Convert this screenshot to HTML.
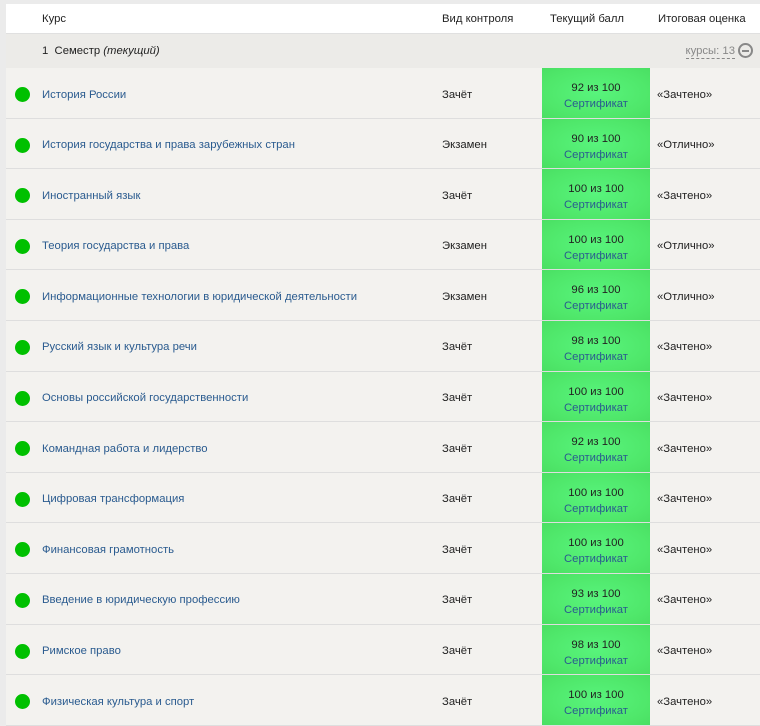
<!DOCTYPE html>
<html><head><meta charset="utf-8"><style>
*{margin:0;padding:0;box-sizing:border-box}
body{width:760px;height:721px;overflow:hidden;background:#ebebeb;font-family:"Liberation Sans",sans-serif;font-size:11.3px;color:#222}
.wrap{position:absolute;left:6px;top:4px;width:754px;background:#f3f2ef}
.hdr{height:30px;background:#fff;border-bottom:1px solid #e0e0e0;position:relative}
.hdr span{position:absolute;top:9px}
.sem{height:34px;background:#ecebe8;position:relative}
.row{height:50.6px;border-bottom:1px solid #dedede;position:relative}
.dot{position:absolute;left:9px;top:19px;width:15px;height:15px;border-radius:50%;background:#00c000}
.name{position:absolute;left:36px;top:20.5px;color:#2a5b8f}
.type{position:absolute;left:436px;top:20.5px}
.score{position:absolute;left:536px;top:0;width:108px;height:100%;background:radial-gradient(ellipse at center,#58f47c 0%,#4fe76a 70%,#4adf63 100%);text-align:center;padding-top:12px;line-height:16px}
.score a{color:#2a5b8f;display:block}
.mark{position:absolute;left:651px;top:20.5px}
</style></head><body>
<div class="wrap">
<div class="hdr"><span style="left:36px">Курс</span><span style="left:436px">Вид контроля</span><span style="left:544px">Текущий балл</span><span style="left:652px">Итоговая оценка</span></div>
<div class="sem"><span style="position:absolute;left:36px;top:11px">1 &nbsp;Семестр <i>(текущий)</i></span><span style="position:absolute;right:25px;top:11px;color:#888;border-bottom:1px dashed #888;line-height:13px">курсы: 13</span><span style="position:absolute;left:732px;top:9px;width:15px;height:15px;border:2px solid #888;border-radius:50%"><span style="position:absolute;left:2px;top:4.5px;width:7px;height:2px;background:#888"></span></span></div>
<div class="row"><div class="dot"></div><span class="name">История России</span><span class="type">Зачёт</span><div class="score">92 из 100<a>Сертификат</a></div><span class="mark">«Зачтено»</span></div>
<div class="row"><div class="dot"></div><span class="name">История государства и права зарубежных стран</span><span class="type">Экзамен</span><div class="score">90 из 100<a>Сертификат</a></div><span class="mark">«Отлично»</span></div>
<div class="row"><div class="dot"></div><span class="name">Иностранный язык</span><span class="type">Зачёт</span><div class="score">100 из 100<a>Сертификат</a></div><span class="mark">«Зачтено»</span></div>
<div class="row"><div class="dot"></div><span class="name">Теория государства и права</span><span class="type">Экзамен</span><div class="score">100 из 100<a>Сертификат</a></div><span class="mark">«Отлично»</span></div>
<div class="row"><div class="dot"></div><span class="name">Информационные технологии в юридической деятельности</span><span class="type">Экзамен</span><div class="score">96 из 100<a>Сертификат</a></div><span class="mark">«Отлично»</span></div>
<div class="row"><div class="dot"></div><span class="name">Русский язык и культура речи</span><span class="type">Зачёт</span><div class="score">98 из 100<a>Сертификат</a></div><span class="mark">«Зачтено»</span></div>
<div class="row"><div class="dot"></div><span class="name">Основы российской государственности</span><span class="type">Зачёт</span><div class="score">100 из 100<a>Сертификат</a></div><span class="mark">«Зачтено»</span></div>
<div class="row"><div class="dot"></div><span class="name">Командная работа и лидерство</span><span class="type">Зачёт</span><div class="score">92 из 100<a>Сертификат</a></div><span class="mark">«Зачтено»</span></div>
<div class="row"><div class="dot"></div><span class="name">Цифровая трансформация</span><span class="type">Зачёт</span><div class="score">100 из 100<a>Сертификат</a></div><span class="mark">«Зачтено»</span></div>
<div class="row"><div class="dot"></div><span class="name">Финансовая грамотность</span><span class="type">Зачёт</span><div class="score">100 из 100<a>Сертификат</a></div><span class="mark">«Зачтено»</span></div>
<div class="row"><div class="dot"></div><span class="name">Введение в юридическую профессию</span><span class="type">Зачёт</span><div class="score">93 из 100<a>Сертификат</a></div><span class="mark">«Зачтено»</span></div>
<div class="row"><div class="dot"></div><span class="name">Римское право</span><span class="type">Зачёт</span><div class="score">98 из 100<a>Сертификат</a></div><span class="mark">«Зачтено»</span></div>
<div class="row"><div class="dot"></div><span class="name">Физическая культура и спорт</span><span class="type">Зачёт</span><div class="score">100 из 100<a>Сертификат</a></div><span class="mark">«Зачтено»</span></div>
</div>
</body></html>
